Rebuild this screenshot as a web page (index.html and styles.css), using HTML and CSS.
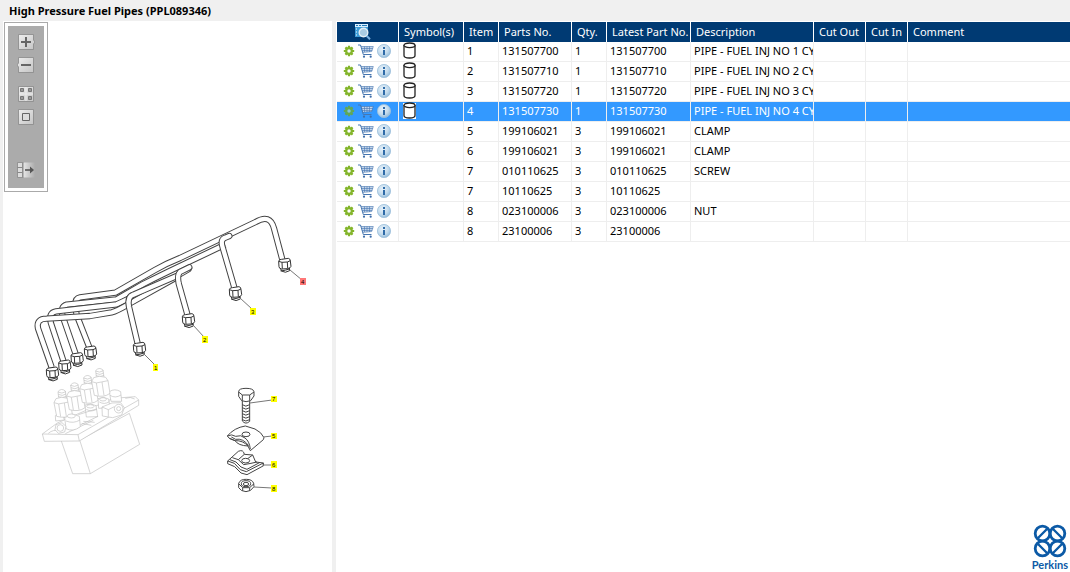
FILE: index.html
```
<!DOCTYPE html>
<html lang="en">
<head>
<meta charset="utf-8">
<title>High Pressure Fuel Pipes (PPL089346)</title>
<link rel="stylesheet" href="styles.css">
</head>
<body>
<svg class="defs" aria-hidden="true">
  <defs>
    <linearGradient id="btn" x1="0" y1="0" x2="1" y2="1"><stop offset="0" stop-color="#eee"/><stop offset="1" stop-color="#c4c4c4"/></linearGradient>
    <linearGradient id="fade"><stop offset="0" stop-color="#e8e8e8"/><stop offset="1" stop-color="#ababab"/></linearGradient>
    <radialGradient id="ball" cx=".4" cy=".35" r=".7"><stop offset="0" stop-color="#e8f2fa"/><stop offset=".6" stop-color="#c2daec"/><stop offset="1" stop-color="#8fb8d8"/></radialGradient>
    <symbol id="gear" viewBox="0 0 12 12">
      <g stroke="#84b52b" stroke-width="2.2"><path d="M6 .8V11.2M.8 6H11.2M2.4 2.4 9.6 9.6M9.6 2.4 2.4 9.6"/></g>
      <circle cx="6" cy="6" r="3.9" fill="#84b52b"/><circle cx="6" cy="6" r="1.7" fill="#fff"/>
    </symbol>
    <symbol id="gear-sel" viewBox="0 0 12 12">
      <g stroke="#5fa857" stroke-width="2.2"><path d="M6 .8V11.2M.8 6H11.2M2.4 2.4 9.6 9.6M9.6 2.4 2.4 9.6"/></g>
      <circle cx="6" cy="6" r="3.9" fill="#5fa857"/><circle cx="6" cy="6" r="1.7" fill="#82c3df"/>
    </symbol>
    <symbol id="cart" viewBox="0 0 16 14">
      <path d="M3.5 2.500H15L13.500 7.500 5 8Z" fill="#c3d5ea"/>
      <g fill="none" stroke="#4676b0"><path d="M0 1H2.500L5.300 10.500H13.500" stroke-width="1"/><path d="M3 2.500H15.300L13.700 7.500 4.800 8.500M3.600 4.500H14.800M4 6.500H14.200M6.500 2.500V8M9 2.500V8M11.500 2.500V8" stroke-width=".6"/></g>
      <circle cx="6" cy="12.700" r="1.100" fill="#3e6eaa"/><circle cx="12.700" cy="12.700" r="1.100" fill="#3e6eaa"/>
    </symbol>
    <symbol id="info" viewBox="0 0 14 14">
      <circle cx="7" cy="7" r="6.6" fill="url(#ball)" stroke="#9dc0dc" stroke-width=".8"/>
      <path d="M6 3H8V5H6ZM6 6H8V11H6Z" fill="#2f6ba8"/>
    </symbol>
    <symbol id="can" viewBox="0 0 15 17">
      <path d="M2 3V13.5C2 15 4.200 16 7.500 16S13 15 13 13.500V3" fill="#fff" stroke="#222" stroke-width="1.300"/>
      <ellipse cx="7.500" cy="3.300" rx="5.500" ry="2.300" fill="#fff" stroke="#222" stroke-width="1.300"/>
    </symbol>
    <symbol id="can-sel" viewBox="0 0 15 17">
      <path d="M1 1H14V17H1Z" fill="#fff"/><use href="#can"/>
    </symbol>
    <g id="nut">
      <path d="M-13 10-10 21Q2 29 15 20L14 9Z"/>
      <path d="M-18-8Q-16-15-9-14L11-17Q17-16 17-9L19 7Q17 13 8 14L-9 15Q-17 14-17 8Z"/>
      <path d="M-18-8-8-5 8-6 17-10M-8-5-7 14M8-6 9 13M-12 21Q3 19 14 15" fill="none"/>
    </g>
    <g id="injector">
      <path d="M-8-40-10-58Q0-70 12-60L15-38Z"/>
      <path d="M-10-57Q2-50 13-58M-9-50Q3-43 14-51M-9-43Q3-37 15-44" fill="none"/>
      <path d="M-22-25-16-37Q0-45 20-38L27-28 33 10Q15 24-14 16Z"/>
      <path d="M-22-25Q-8-18 7-24L27-28M-8-21-2 17M9-24 15 16" fill="none"/>
    </g>
    <path id="pipe4" d="M208 442 170 345 166 320Q164 295 180 292L286 278 405 210Q440 190 480 174L707 66Q750 40 762 85L790 190"/>
    <path id="pipe3" d="M168 465 130 355Q118 320 140 314L290 298 370 252Q430 222 470 203L615 134"/>
    <path id="pipe2" d="M131 485 93 370Q84 338 108 334L290 313 350 285 470 230"/>
    <path id="pipe1" d="M95 502 54 385Q48 356 80 356L210 348 275 337Q290 334 330 310L468 233"/>
    <path id="head3" d="M644 266 608 142Q600 118 616 113L628 108"/>
    <path id="head1" d="M354 435 327 320Q321 290 340 284L470 228 505 208"/>
    <path id="head2" d="M504 350 476 250Q471 225 480 216L508 202"/>
  </defs>
</svg>

<header class="title-bar"><h1>High Pressure Fuel Pipes (PPL089346)</h1></header>
<main class="panes">
  <section class="drawing" aria-label="Illustration">
    <div class="toolbar">
      <div class="tools">
        <button type="button" aria-label="Zoom in"><svg viewBox="0 0 18 16"><path d="M1.500.5H16.500V6L18 8 16.500 10V15.500H1.500Z" fill="url(#btn)" stroke="#888" stroke-width=".8"/><path d="M4 8H14M9 3V13" stroke="#666" stroke-width="2"/></svg></button>
        <button type="button" aria-label="Zoom out"><svg viewBox="0 0 18 16"><path d="M1.500.5H16.500V15.500H1.500V10L0 8 1.500 6Z" fill="url(#btn)" stroke="#888" stroke-width=".8"/><path d="M4 8H14" stroke="#666" stroke-width="2"/></svg></button>
        <button type="button" class="group" aria-label="Fit to window"><svg viewBox="0 0 18 16"><path d="M1.500.5H16.500V15.500H1.500Z" fill="url(#btn)" stroke="#888" stroke-width=".8"/><path d="M9 1V15M2 8H16" stroke="#eee"/><path d="M3.500 2.500H6.500V5.500H3.500ZM11.500 2.500H14.500V5.500H11.500ZM3.500 10.500H6.500V13.500H3.500ZM11.500 10.500H14.500V13.500H11.500Z" fill="#999" stroke="#777"/></svg></button>
        <button type="button" aria-label="Actual size"><svg viewBox="0 0 18 16"><path d="M1.500.5H16.500V15.500H1.500Z" fill="url(#btn)" stroke="#888" stroke-width=".8"/><path d="M5.500 4.500H12.500V11.500H5.500Z" fill="#ddd" stroke="#666"/></svg></button>
        <button type="button" class="last" aria-label="Hide list"><svg viewBox="0 0 18 16"><path d="M.5.500H5.500V15.500H.5Z" fill="#ddd" stroke="#888" stroke-width=".8"/><path d="M.5 5.500H5.500M.5 10.500H5.500" stroke="#888"/><path d="M6 .5H18V15.500H6Z" fill="url(#fade)"/><path d="M6 0V16" stroke="#888"/><path d="M8 8H15" stroke="#555" stroke-width="1.600"/><path d="M13 4.500 17 8 13 11.500Z" fill="#555"/></svg></button>
      </div>
    </div>
    <svg class="diagram" viewBox="3 192 329 308" role="img" aria-label="Fuel pipes, pump and clamp parts">
      <g class="pipes" transform="translate(20 200) scale(.33333)">
        <use class="edge" href="#pipe4"/><use class="core" href="#pipe4"/>
        <use class="edge" href="#pipe3"/><use class="core" href="#pipe3"/>
        <use class="edge" href="#pipe2"/><use class="core" href="#pipe2"/>
        <use class="edge" href="#pipe1"/><use class="core" href="#pipe1"/>
        <g stroke-linecap="round">
          <use class="edge" href="#head3"/><use class="core" href="#head3"/>
          <use class="edge" href="#head1"/><use class="core" href="#head1"/>
          <use class="edge" href="#head2"/><use class="core" href="#head2"/>
        </g>
      </g>
      <g class="nuts" transform="translate(20 200) scale(.33333)">
        <use href="#nut" x="97" y="518"/><use href="#nut" x="134" y="497"/><use href="#nut" x="171" y="475"/><use href="#nut" x="211" y="455"/>
        <use href="#nut" x="358" y="444"/><use href="#nut" x="505" y="358"/><use href="#nut" x="646" y="277"/><use href="#nut" x="794" y="192"/>
      </g>
      <g class="pump" transform="translate(30 355) scale(.33333)">
        <path d="M93 255 128 356H181L329 268 298 175 150 255Z"/>
        <path d="M150 258 181 356" fill="none"/>
        <path d="M37 237 82 204 250 130 316 125 326 135V151L148 258 43 259Z"/>
        <path d="M37 237 144 239 326 135M144 239 148 258M55 235Q70 222 88 228M106 236 190 196M286 130Q302 124 314 132" fill="none"/>
        <path d="M76 182 86 172 98 176 103 195 77 198Z"/>
        <path d="M104 186Q125 173 148 184L151 215Q130 232 108 221ZM165 150Q182 143 198 152L203 185 169 186ZM204 131Q220 123 236 132L240 158 206 160ZM238 110Q254 99 272 110L275 139 243 139Z"/>
        <path d="M145 179 199 162M151 210 204 184M108 198Q130 207 150 195M169 163Q185 173 201 162M208 141Q223 150 238 140M240 121Q256 131 273 120" fill="none"/>
        <use href="#injector" x="94" y="168"/><use href="#injector" x="132" y="148"/><use href="#injector" x="171" y="126"/><use href="#injector" x="207" y="105"/>
        <path d="M78 209 96 203 108 214 104 231 85 235 75 224ZM216 156 246 144 272 143 283 158 275 180 248 188 217 183Z"/>
        <circle cx="91" cy="219" r="10"/><circle cx="266" cy="161" r="13"/><circle cx="266" cy="161" r="6"/>
        <path d="M216 156 235 164 253 155M235 164V185M155 205 184 211M160 199 194 202" fill="none"/>
        <ellipse cx="124" cy="183" rx="12" ry="6"/><ellipse cx="181" cy="154" rx="11" ry="5"/><ellipse cx="219" cy="133" rx="10" ry="5"/>
      </g>
      <g class="clamp" transform="translate(215 375) scale(.33333)">
        <path d="M82 72V138Q92 150 104 139V72Z"/>
        <path d="M82 89Q92 98 104 89M82 98Q92 107 104 98M82 107Q92 116 104 107M82 116Q92 125 104 116M82 125Q92 134 104 125M82 134Q92 142 104 134" fill="none"/>
        <path d="M71 50Q71 40 93 40T117 50V63L107 77Q93 83 80 77L71 64Z"/><path d="M71 51 82 60H104L117 51M82 60V77M104 60V77" fill="none"/>
        <path d="M37 183Q58 158 91 153L120 162Q140 172 147 188L145 194 106 227Q101 218 99 213 84 196 60 197L43 190Z"/>
        <path d="M37 183Q50 176 62 184 78 178 90 189 103 198 106 222M43 190 60 197Q70 212 99 213M49 186 62 193Q84 189 101 212" fill="none"/>
        <ellipse cx="93" cy="178" rx="12" ry="7"/>
        <path d="M38 258 70 229Q85 222 88 238L113 240 122 261 145 264 146 272 96 299 78 294 59 275 38 266Z"/>
        <path d="M38 258 58 265 76 284 94 290 145 264M45 254 63 261 78 276 96 283 135 262M52 248 70 254 86 269 108 265 126 261M88 238 70 254M113 240 90 257" fill="none"/>
        <ellipse cx="92" cy="257" rx="12" ry="7"/>
        <path d="M71 325Q76 312 94 313 112 313 116 325L117 335Q108 350 93 350 77 349 71 338Z"/>
        <path d="M71 326 83 338 104 338 117 326M83 338V347M104 338V347" fill="none"/><ellipse cx="93" cy="326" rx="14" ry="9"/><ellipse cx="93" cy="327" rx="8" ry="5"/>
      </g>
      <path class="leaders" d="M144 354 155 365M193 325 204 337M240 298 252 309M290 270 302 280M250 403 272 400M263 437 272 436M262 465 272 465M254 487 272 488"/>
      <g class="tags">
        <path fill="#ff0" d="M153 364H158V371H153ZM202 336H208V343H202ZM250 308H256V315H250ZM271 396H277V402H271ZM271 433H277V439H271ZM271 461H277V468H271ZM271 485H277V492H271Z"/>
        <path fill="#f77" d="M300 278H306V285H300Z"/>
        <text x="154" y="370">1</text><text x="203" y="342">2</text><text x="251" y="314">3</text><text x="301" y="284">4</text><text x="272" y="401">7</text><text x="272" y="438">5</text><text x="272" y="467">6</text><text x="272" y="491">8</text>
      </g>
    </svg>
  </section>

  <section class="parts" aria-label="Parts list">
    <table>
      <colgroup><col class="w-tools"><col class="w-symbol"><col class="w-short"><col class="w-part"><col class="w-short"><col class="w-latest"><col class="w-desc"><col class="w-out"><col class="w-in"><col></colgroup>
      <thead><tr>
        <th scope="col" aria-label="Actions"><svg class="find" viewBox="0 0 16 16"><path d="M0 0H13V13H0Z" fill="#3d9bd6"/><path d="M0 0H13V3H0Z" fill="#d8efff"/><path d="M1 1.500H3M4 1.500H6M7 1.500H12" stroke="#247cba"/><path d="M1 5H2M1 8H2M1 11H2" stroke="#fff"/><circle cx="8.500" cy="8.500" r="4.300" fill="#a9cbe3" stroke="#e4eef5" stroke-width="1.400"/><path d="M11.800 12 15 15.200" stroke="#78aee0" stroke-width="2"/></svg></th>
        <th scope="col">Symbol(s)</th><th scope="col">Item</th><th scope="col">Parts No.</th><th scope="col">Qty.</th><th scope="col">Latest Part No.</th><th scope="col">Description</th><th scope="col">Cut Out</th><th scope="col">Cut In</th><th scope="col">Comment</th>
      </tr></thead>
      <tbody>
        <tr><td class="acts"><div><svg class="gear"><use href="#gear"/></svg><svg class="cart"><use href="#cart"/></svg><svg class="info"><use href="#info"/></svg></div></td><td><svg class="can"><use href="#can"/></svg></td><td>1</td><td>131507700</td><td>1</td><td>131507700</td><td>PIPE - FUEL INJ NO 1 CY</td><td></td><td></td><td></td></tr>
        <tr><td class="acts"><div><svg class="gear"><use href="#gear"/></svg><svg class="cart"><use href="#cart"/></svg><svg class="info"><use href="#info"/></svg></div></td><td><svg class="can"><use href="#can"/></svg></td><td>2</td><td>131507710</td><td>1</td><td>131507710</td><td>PIPE - FUEL INJ NO 2 CY</td><td></td><td></td><td></td></tr>
        <tr><td class="acts"><div><svg class="gear"><use href="#gear"/></svg><svg class="cart"><use href="#cart"/></svg><svg class="info"><use href="#info"/></svg></div></td><td><svg class="can"><use href="#can"/></svg></td><td>3</td><td>131507720</td><td>1</td><td>131507720</td><td>PIPE - FUEL INJ NO 3 CY</td><td></td><td></td><td></td></tr>
        <tr class="selected"><td class="acts"><div><svg class="gear"><use href="#gear-sel"/></svg><svg class="cart"><use href="#cart"/></svg><svg class="info"><use href="#info"/></svg></div></td><td><svg class="can"><use href="#can-sel"/></svg></td><td>4</td><td>131507730</td><td>1</td><td>131507730</td><td>PIPE - FUEL INJ NO 4 CY</td><td></td><td></td><td></td></tr>
        <tr><td class="acts"><div><svg class="gear"><use href="#gear"/></svg><svg class="cart"><use href="#cart"/></svg><svg class="info"><use href="#info"/></svg></div></td><td></td><td>5</td><td>199106021</td><td>3</td><td>199106021</td><td>CLAMP</td><td></td><td></td><td></td></tr>
        <tr><td class="acts"><div><svg class="gear"><use href="#gear"/></svg><svg class="cart"><use href="#cart"/></svg><svg class="info"><use href="#info"/></svg></div></td><td></td><td>6</td><td>199106021</td><td>3</td><td>199106021</td><td>CLAMP</td><td></td><td></td><td></td></tr>
        <tr><td class="acts"><div><svg class="gear"><use href="#gear"/></svg><svg class="cart"><use href="#cart"/></svg><svg class="info"><use href="#info"/></svg></div></td><td></td><td>7</td><td>010110625</td><td>3</td><td>010110625</td><td>SCREW</td><td></td><td></td><td></td></tr>
        <tr><td class="acts"><div><svg class="gear"><use href="#gear"/></svg><svg class="cart"><use href="#cart"/></svg><svg class="info"><use href="#info"/></svg></div></td><td></td><td>7</td><td>10110625</td><td>3</td><td>10110625</td><td></td><td></td><td></td><td></td></tr>
        <tr><td class="acts"><div><svg class="gear"><use href="#gear"/></svg><svg class="cart"><use href="#cart"/></svg><svg class="info"><use href="#info"/></svg></div></td><td></td><td>8</td><td>023100006</td><td>3</td><td>023100006</td><td>NUT</td><td></td><td></td><td></td></tr>
        <tr><td class="acts"><div><svg class="gear"><use href="#gear"/></svg><svg class="cart"><use href="#cart"/></svg><svg class="info"><use href="#info"/></svg></div></td><td></td><td>8</td><td>23100006</td><td>3</td><td>23100006</td><td></td><td></td><td></td><td></td></tr>
      </tbody>
    </table>
    <div class="brand">
      <svg viewBox="0 0 34 34" aria-hidden="true"><g fill="none" stroke="#0c5aa6" stroke-width="2.800">
        <circle cx="9.500" cy="9.500" r="7.300"/><circle cx="24.500" cy="9.500" r="7.300"/><circle cx="9.500" cy="24.500" r="7.300"/><circle cx="24.500" cy="24.500" r="7.300"/>
        <path d="M5 14 14 5M29 14 20 5M5 20 14 29M29 20 20 29" stroke-width="2.400"/></g></svg>
      <span>Perkins</span>
    </div>
  </section>
</main>
</body>
</html>
```
FILE: styles.css
```
* { box-sizing: border-box; }
body {
  margin: 0;
  min-height: 100vh;
  display: flex;
  flex-direction: column;
  background: #f0f0f0;
  color: #000;
  font: 11px/17px "Noto Sans", "Open Sans", sans-serif;
}
.defs { position: absolute; width: 0; height: 0; }
.title-bar { padding: 1px 9px; }
h1 { margin: 0; font-size: 11px; line-height: 19px; font-weight: 700; }
.panes {
  flex: 1;
  display: grid;
  grid-template-columns: 329px minmax(0, 1fr);
  gap: 4px;
  padding-left: 3px;
}
.drawing { background: #fff; padding: 1px 0 0; }
.toolbar {
  width: 44px;
  margin-left: 1px;
  padding: 3px;
  border: 1px solid #aaa;
}
.tools {
  display: flex;
  flex-direction: column;
  align-items: center;
  gap: 7px;
  padding: 8px 0 10px;
  background: #ababab;
}
.tools button { width: 18px; height: 16px; padding: 0; border: 0; background: none; }
.tools svg { display: block; width: 18px; height: 16px; }
.tools .group { margin-top: 6px; }
.tools .last { margin-top: 30px; }
.diagram { display: block; width: 100%; }
.pipes { fill: none; stroke-linejoin: round; }
.edge { stroke: #444; stroke-width: 19px; }
.core { stroke: #fff; stroke-width: 13px; }
.nuts { fill: #fff; stroke: #333; stroke-width: 3px; }
.pump { fill: #fff; stroke: #c0c0c0; stroke-width: 2px; stroke-linejoin: round; }
.clamp { fill: #fff; stroke: #444; stroke-width: 3px; stroke-linejoin: round; }
.leaders { fill: none; stroke: #777; stroke-width: 1px; }
.tags { font: 6px "Liberation Sans", sans-serif; }

.parts {
  display: flex;
  flex-direction: column;
  background: #fff;
  padding: 1px 0 0 1px;
}
table { width: 100%; table-layout: fixed; border-collapse: separate; border-spacing: 0; }
.w-tools { width: 62px; }
.w-symbol { width: 65px; }
.w-short { width: 35px; }
.w-part { width: 73px; }
.w-latest { width: 84px; }
.w-desc { width: 123px; }
.w-out { width: 52px; }
.w-in { width: 42px; }
th, td {
  height: 20px;
  padding: 0 0 2px 3px;
  border-right: 1px solid #eee;
  text-align: left;
  vertical-align: top;
  white-space: nowrap;
  overflow: hidden;
}
th { padding: 1px 0 2px 5px; background: #003a73; color: #fff; font-weight: 400; border-color: #fff; }
td { border-bottom: 1px solid #eee; }
th:last-child, td:last-child { border-right: 0; }
.find { display: block; width: 16px; height: 16px; margin: 1px 0 0 13px; }
td svg { display: block; }
.acts { padding-left: 6px; }
.acts div { display: flex; align-items: center; gap: 3px; height: 18px; }
.acts { padding-bottom: 1px; }
.gear { width: 12px; height: 12px; }
.cart { width: 16px; height: 14px; }
.info { width: 14px; height: 14px; }
.can { width: 15px; height: 17px; }
.selected td { background: #39f; color: #fff; }
.brand {
  display: flex;
  flex-direction: column;
  align-items: center;
  align-self: flex-end;
  margin-top: auto;
  padding-right: 2px;
  color: #0c5aa6;
  font: 700 11px/14px Lato, "Open Sans", sans-serif;
}
.brand svg { width: 34px; height: 34px; }
```
